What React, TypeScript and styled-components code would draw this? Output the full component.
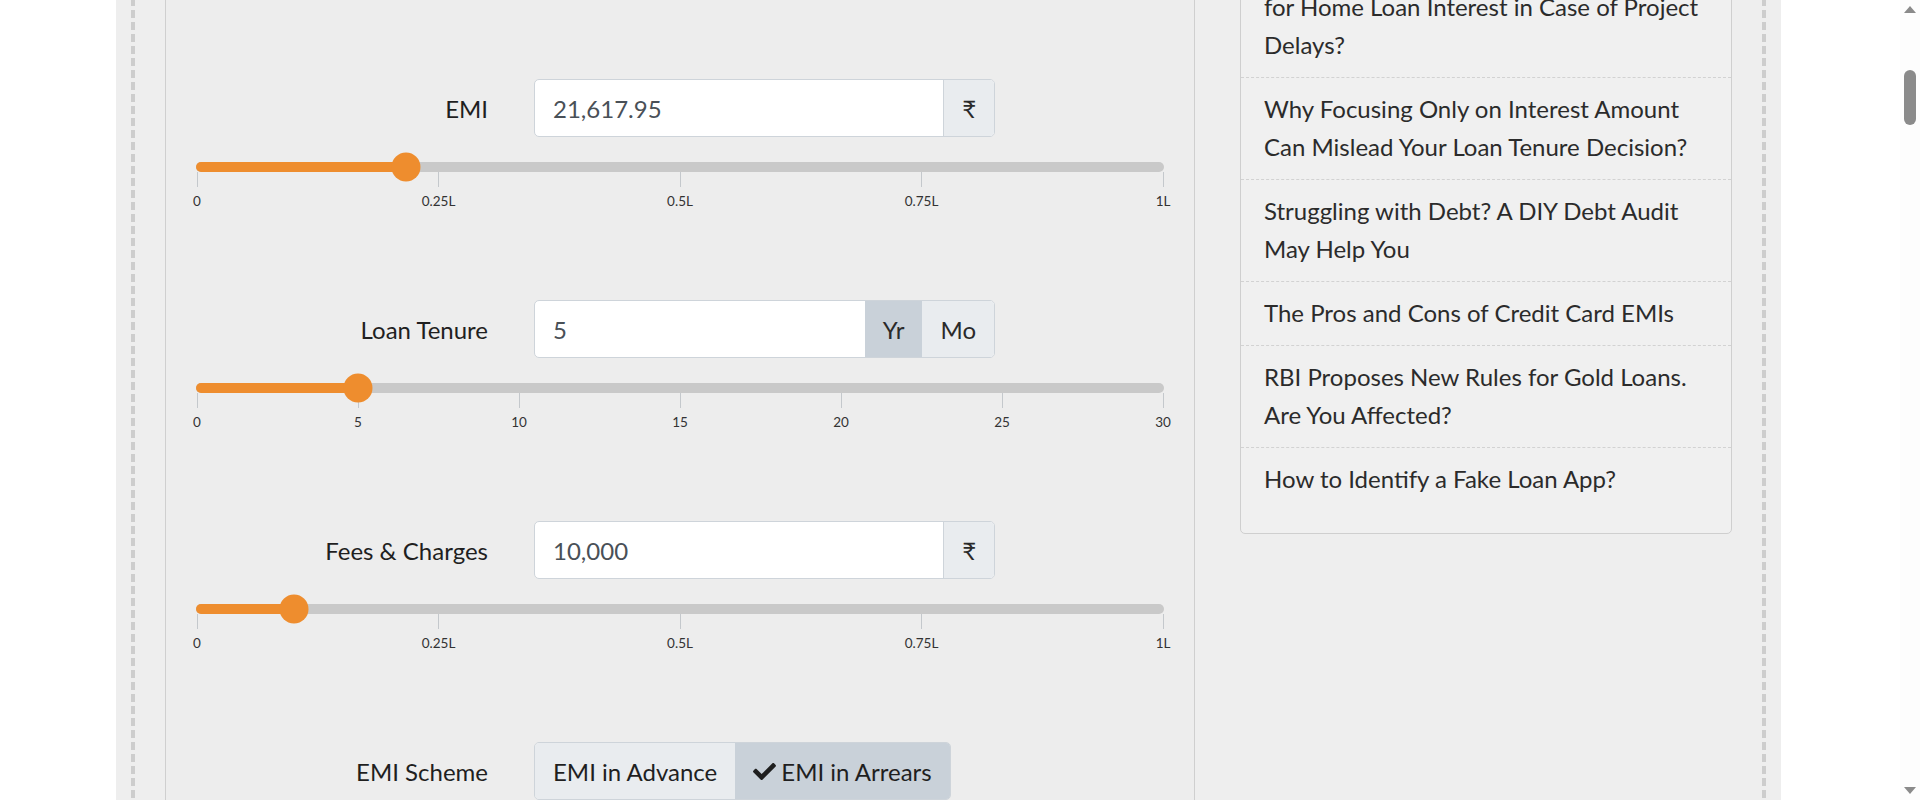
import React from 'react';
import styled, { createGlobalStyle } from 'styled-components';
import { FaCheck } from 'react-icons/fa';

const GlobalStyle = createGlobalStyle`
  html, body { margin: 0; padding: 0; background: #ffffff; }
  body { font-family: Lato, "Noto Sans", sans-serif; }
  * { box-sizing: border-box; }
`;

const Page = styled.div`
  padding-left: 116px;
`;

const Shell = styled.div`
  width: 1665px;
  min-height: 1100px;
  background: #eeeeee;
  padding: 0 15px;
`;

const Frame = styled.div`
  min-height: 1100px;
  padding: 0 34px;
  display: flex;
  align-items: flex-start;
  gap: 45px;
  background-image: linear-gradient(#cdcdcd 0 8px, transparent 8px), linear-gradient(#cdcdcd 0 8px, transparent 8px);
  background-size: 4px 12px, 4px 12px;
  background-repeat: repeat-y, repeat-y;
  background-position: left 0 top 10px, right 0 top 10px;
`;

const CalcPanel = styled.section`
  width: 1030px;
  min-height: 1000px;
  background: #ededed;
  border-left: 1px solid #cfcfcf;
  border-right: 1px solid #cfcfcf;
  padding: 79px 0 60px;
  display: flex;
  flex-direction: column;
  gap: 91px;
`;

const Field = styled.div`
  display: flex;
  flex-direction: column;
`;

const FormRow = styled.div`
  display: flex;
  align-items: center;
  height: 58px;
`;

const Label = styled.label`
  width: 322px;
  margin-right: 46px;
  text-align: right;
  font-size: 24px;
  color: #1f1f1f;
`;

const InputGroup = styled.div`
  width: 461px;
  height: 58px;
  display: flex;
  border: 1px solid #ced4da;
  border-radius: 5px;
  overflow: hidden;
  background: #ffffff;
`;

const TextInput = styled.input`
  flex: 1;
  min-width: 0;
  border: none;
  outline: none;
  padding: 0 18px;
  font-family: Lato, "Noto Sans", sans-serif;
  font-size: 24px;
  color: #495057;
  background: transparent;
`;

const Addon = styled.span<{ $active?: boolean; $divider?: boolean }>`
  display: flex;
  align-items: center;
  justify-content: center;
  padding: 0 18px;
  font-size: 24px;
  color: #2a2a2a;
  background: ${(p) => (p.$active ? '#c9d1d9' : '#e9ecef')};
  border-left: ${(p) => (p.$divider ? '1px solid #ced4da' : 'none')};
`;

const Slider = styled.div`
  margin: 25px 30px 0 30px;
`;

const Track = styled.div`
  position: relative;
  height: 10px;
  border-radius: 5px;
  background: #c9c9c9;
`;

const Fill = styled.div`
  height: 100%;
  border-radius: 5px;
  background: #ee8d2e;
`;

const Handle = styled.span`
  position: absolute;
  top: 50%;
  width: 29px;
  height: 29px;
  border-radius: 50%;
  background: #ee8d2e;
  transform: translate(-50%, -50%);
`;

const Pips = styled.div`
  display: flex;
  justify-content: space-between;
  padding: 0 1px;
`;

const Pip = styled.div`
  width: 0;
  display: flex;
  flex-direction: column;
  align-items: center;
`;

const Tick = styled.span`
  width: 1px;
  height: 15px;
  background: #c4c8cc;
`;

const PipLabel = styled.span`
  margin-top: 6px;
  font-size: 13.5px;
  line-height: 16px;
  color: #333333;
  white-space: nowrap;
`;

const SegmentGroup = styled.div`
  display: flex;
  height: 58px;
  border: 1px solid #ced4da;
  border-radius: 5px;
  overflow: hidden;
`;

const SegmentButton = styled.button<{ $active?: boolean }>`
  display: flex;
  align-items: center;
  gap: 5px;
  padding: 0 18px;
  border: none;
  font-family: Lato, "Noto Sans", sans-serif;
  font-size: 24px;
  color: #1f1f1f;
  background: ${(p) => (p.$active ? '#c9d1d9' : '#e9ecef')};
  cursor: pointer;
`;

const Sidebar = styled.aside`
  width: 492px;
  margin-top: -25px;
  border: 1px solid #cfcfcf;
  border-radius: 5px;
  background: #f0f0f0;
  padding-bottom: 22px;
  display: flex;
  flex-direction: column;
`;

const ArticleLink = styled.a`
  display: block;
  padding: 12px 23px 13px;
  font-size: 24px;
  line-height: 38px;
  color: #2b2b2b;
  text-decoration: none;
  border-bottom: 1px dashed #d2d2d2;
  &:last-child { border-bottom: none; }
`;

const ScrollRail = styled.div`
  position: fixed;
  top: 0;
  right: 0;
  width: 20px;
  height: 100vh;
  background: #fdfdfd;
  display: flex;
  flex-direction: column;
  align-items: center;
`;

const ArrowUp = styled.span`
  margin-top: 6px;
  border-left: 6px solid transparent;
  border-right: 6px solid transparent;
  border-bottom: 7px solid #8b8b8b;
`;

const ScrollThumb = styled.span`
  margin-top: 57px;
  width: 12px;
  height: 55px;
  border-radius: 6px;
  background: #8b8b8b;
`;

const ArrowDown = styled.span`
  margin-top: auto;
  margin-bottom: 6px;
  border-left: 6px solid transparent;
  border-right: 6px solid transparent;
  border-top: 7px solid #8b8b8b;
`;

type SliderProps = { value: number; max: number; ticks: string[] };

function RangeSlider({ value, max, ticks }: SliderProps) {
  const pct = value / max;
  const pos = `calc(1px + ${pct} * (100% - 2px))`;
  return (
    <Slider>
      <Track>
        <Fill style={{ width: pos }} />
        <Handle style={{ left: pos }} />
      </Track>
      <Pips>
        {ticks.map((t) => (
          <Pip key={t}>
            <Tick />
            <PipLabel>{t}</PipLabel>
          </Pip>
        ))}
      </Pips>
    </Slider>
  );
}

const lakhTicks = ['0', '0.25L', '0.5L', '0.75L', '1L'];
const yearTicks = ['0', '5', '10', '15', '20', '25', '30'];

const articles = [
  'for Home Loan Interest in Case of Project Delays?',
  'Why Focusing Only on Interest Amount Can Mislead Your Loan Tenure Decision?',
  'Struggling with Debt? A DIY Debt Audit May Help You',
  'The Pros and Cons of Credit Card EMIs',
  'RBI Proposes New Rules for Gold Loans. Are You Affected?',
  'How to Identify a Fake Loan App?',
];

export default function App() {
  return (
    <>
      <GlobalStyle />
      <Page>
        <Shell>
          <Frame>
            <CalcPanel>
              <Field>
                <FormRow>
                  <Label>EMI</Label>
                  <InputGroup>
                    <TextInput defaultValue="21,617.95" />
                    <Addon $divider>₹</Addon>
                  </InputGroup>
                </FormRow>
                <RangeSlider value={21617.95} max={100000} ticks={lakhTicks} />
              </Field>
              <Field>
                <FormRow>
                  <Label>Loan Tenure</Label>
                  <InputGroup>
                    <TextInput defaultValue="5" />
                    <Addon $active>Yr</Addon>
                    <Addon>Mo</Addon>
                  </InputGroup>
                </FormRow>
                <RangeSlider value={5} max={30} ticks={yearTicks} />
              </Field>
              <Field>
                <FormRow>
                  <Label>Fees &amp; Charges</Label>
                  <InputGroup>
                    <TextInput defaultValue="10,000" />
                    <Addon $divider>₹</Addon>
                  </InputGroup>
                </FormRow>
                <RangeSlider value={10000} max={100000} ticks={lakhTicks} />
              </Field>
              <Field>
                <FormRow>
                  <Label>EMI Scheme</Label>
                  <SegmentGroup>
                    <SegmentButton>EMI in Advance</SegmentButton>
                    <SegmentButton $active>
                      <FaCheck size={23} />
                      EMI in Arrears
                    </SegmentButton>
                  </SegmentGroup>
                </FormRow>
              </Field>
            </CalcPanel>
            <Sidebar>
              {articles.map((a) => (
                <ArticleLink key={a} href="#">
                  {a}
                </ArticleLink>
              ))}
            </Sidebar>
          </Frame>
        </Shell>
      </Page>
      <ScrollRail aria-hidden="true">
        <ArrowUp />
        <ScrollThumb />
        <ArrowDown />
      </ScrollRail>
    </>
  );
}
